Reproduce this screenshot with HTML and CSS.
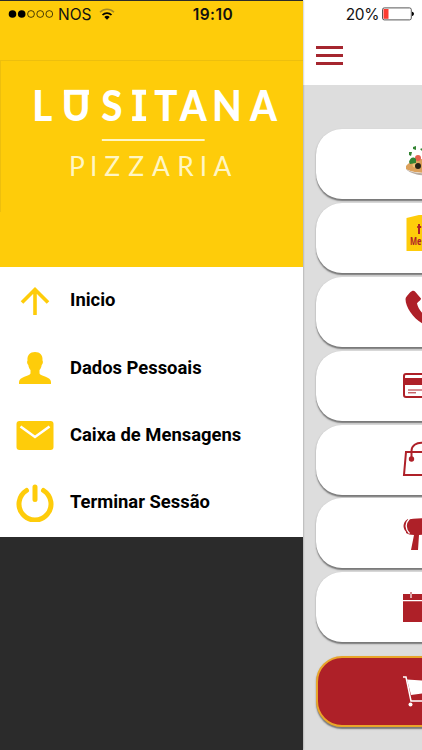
FILE: index.html
```html
<!DOCTYPE html>
<html lang="pt">
<head>
  <meta charset="UTF-8">
  <title>Lusitana Pizzaria</title>
  <link rel="stylesheet" href="styles.css">
</head>
<body>

<div class="app">
  <aside class="drawer">
    <div class="brand">
      <svg class="logo" width="303" height="152" viewBox="0 60 303 152">
        <text class="logo-name" transform="scale(.9 1)" y="120.500" x="34.500 67.500 111.500 147.500 171 199.500 235.500 278">LUSITANA</text>
        <path d="M63 91.500h25" stroke="#fff" stroke-width="5"/>
        <path d="M131.500 91.500h14M131.500 118h14" stroke="#fff" stroke-width="5"/>
        <path d="M101 139.500h103.500" stroke="#fff6c4" stroke-width="2"/>
        <text class="logo-sub" y="176" x="68 89 103.500 127.500 151.500 177 199.500 213.500">PIZZARIA</text>
      </svg>
    </div>

    <ul class="menu">
      <li>
        <svg width="38" height="38" viewBox="0 0 38 38"><path d="M19 33V8M6 20.500 19 7.500 32 20.500" fill="none" stroke="#fecc0a" stroke-width="3.600"/></svg>
        <span>Inicio</span>
      </li>
      <li>
        <svg width="38" height="38" viewBox="0 0 38 38"><path fill="#fecc0a" d="M19 3c5 0 8 3 7.500 8.500.8 1 .4 3.500-.8 4.500-.4 2.500-1.200 4-2.200 5v3.500c1 3 11.500 3 11.500 8.500v2H3v-2c0-5.500 10.500-5.500 11.500-8.500V21c-1-1-1.800-2.500-2.200-5-1.200-1-1.600-3.500-.8-4.500C11 6 14 3 19 3z"/></svg>
        <span>Dados Pessoais</span>
      </li>
      <li>
        <svg width="38" height="38" viewBox="0 0 38 38"><rect x="0.500" y="5" width="37" height="29" rx="3" fill="#fecc0a"/><path d="M4.500 10.500 19 21 33.500 10.500" fill="none" stroke="#fff" stroke-width="2.600"/></svg>
        <span>Caixa de Mensagens</span>
      </li>
      <li>
        <svg width="38" height="38" viewBox="0 0 38 38"><path d="M10.500 6.500a16 16 0 1 0 17 0M19 3v12.500" fill="none" stroke="#fecc0a" stroke-width="5" stroke-linecap="round"/></svg>
        <span>Terminar Sessão</span>
      </li>
    </ul>
  </aside>

  <main class="page">
    <header class="topbar">
      <div class="burger"><span></span><span></span><span></span></div>
    </header>

    <div class="cards">
      <div class="card raised">
        <svg width="40" height="40" viewBox="0 0 40 40">
          <path d="M4 24c4-4 10-7 18-7h18v13c-12 2-30 1-36-3z" fill="#dca15b"/>
          <path d="M4 27c7 5 21 5 36 4v2c-16 2-31 0-36-6z" fill="#b9aca0"/>
          <circle cx="16" cy="16" r="3" fill="#e4604e"/><circle cx="13" cy="23" r="2.500" fill="#edc479"/>
          <circle cx="16" cy="24" r="3" fill="#272417"/>
          <path d="M7 20c1-4 4-6 7-3v4l-6 1zM11 5l3-1v4l-3-1zM7 10h3l-1 4-2-1zM18 7l3-1v4z" fill="#338433"/>
        </svg>
      </div>
      <div class="card raised">
        <svg width="40" height="40" viewBox="0 0 40 40">
          <path d="M4.500 3 21-1h19v37H4.500z" fill="#fecc0a"/>
          <path d="M17 9v10M15.200 12h4" stroke="#ae2028" stroke-width="2"/>
          <text class="menu-tag" x="8" y="30" textLength="11.500" lengthAdjust="spacingAndGlyphs">Me</text>
        </svg>
      </div>
      <div class="card raised">
        <svg width="40" height="40" viewBox="0 0 40 40"><path fill="#ae2028" d="M8 3.500c2-2 4-2 5-1l6 7c0 2-3 3-4 5 1 5 5 10 10 14 3-1 4-4 6-4l8 6c1 2-4 7-8 7C19 38 3.500 22 3.500 10c0-2 2.500-4 4.500-6.500z"/></svg>
      </div>
      <div class="card">
        <svg width="40" height="40" viewBox="0 0 40 40"><rect x="2" y="8" width="42" height="23" rx="2" fill="#fff" stroke="#ae2028" stroke-width="2"/><path d="M2 15.500h38" stroke="#ae2028" stroke-width="7"/><path d="M6 24h34M6 26.800h8" stroke="#ae2028" stroke-width="1"/></svg>
      </div>
      <div class="card">
        <svg width="40" height="40" viewBox="0 0 40 40"><path d="M4 12h34l3 23H2zM9.500 19v-8c0-11 20-11 20 0v8" fill="none" stroke="#ae2028" stroke-width="2"/><circle cx="9.500" cy="19" r="2.700" fill="#ae2028"/></svg>
      </div>
      <div class="card">
        <svg width="40" height="40" viewBox="0 0 40 40"><path d="M5 7c6-2 18-2 35-2v15l-23 2-1 15H9l3-15c-4 0-6-1-8-2z" fill="#ae2028"/><path d="M6 6C0 9 0 17 6 20z" fill="#ae2028"/><path d="M7.500 5.500c-4.500 5-4.500 10 0 15" fill="none" stroke="#fff" stroke-width="1.300"/></svg>
      </div>
      <div class="card">
        <svg width="40" height="40" viewBox="0 0 40 40"><path d="M1 7h39v28H1z" fill="#ae2028"/><path d="M1 13.700h39M9 7v4" stroke="#fff" stroke-width="1.200"/><path d="M9 5v2" stroke="#ae2028"/></svg>
      </div>
      <div class="card cart">
        <svg width="40" height="40" viewBox="0 0 40 40"><path d="M1 5h3l5 24h31" fill="none" stroke="#fff" stroke-width="1.500"/><path d="M5 7.500 40 10v9L9 23z" fill="#fff"/><circle cx="8.500" cy="32.500" r="2" fill="#fff"/></svg>
      </div>
    </div>
  </main>

  <!-- iOS status bar, on top of both panels -->
  <div class="status">
    <div class="status-left">
      <svg width="45" height="10" viewBox="0 0 45 10">
        <circle cx="4.500" cy="5" r="3.800"/><circle cx="13.700" cy="5" r="3.800"/>
        <g fill="none" stroke="#000" stroke-width=".7"><circle cx="23" cy="5" r="3.400"/><circle cx="32.200" cy="5" r="3.400"/><circle cx="41.300" cy="5" r="3.400"/></g>
      </svg>
      <span class="carrier">NOS</span>
      <svg width="16" height="12" viewBox="0 0 16 12">
        <path d="M1 4.200c4-4 10-4 14 0" fill="none" stroke="#a58a22" stroke-width="1.500"/>
        <path d="M3.500 7c2.500-2.600 6.500-2.600 9 0" fill="none" stroke="#000" stroke-width="1.800"/>
        <path d="M5.300 8.900c1.500-1.500 3.900-1.500 5.400 0L8 11.700z"/>
      </svg>
    </div>
    <div class="time">19:10</div>
    <div class="status-right">
      <span>20%</span>
      <svg width="33" height="14" viewBox="0 0 33 14">
        <rect x=".5" y=".9" width="28.800" height="12" rx="1.800" fill="#fff" stroke="#444" stroke-width=".9"/>
        <rect x="1.500" y="2" width="5" height="9.800" fill="#fb3b30"/>
        <path d="M30 4.800c2.600 0 2.600 4.200 0 4.200z"/>
      </svg>
    </div>
  </div>
</div>

</body>
</html>
```
FILE: styles.css
```css
* {
  box-sizing: border-box;
}

body {
  margin: 0;
  font-family: Roboto, sans-serif;
}

.app {
  position: relative;
  display: flex;
  width: 422px;
  height: 750px;
  overflow: hidden;
  background: #ddd;
}

.drawer {
  position: relative;
  flex: 0 0 303px;
  background: #2b2b2b;
  box-shadow: 0 0 2px rgba(0, 0, 0, 0.4);
}

.brand {
  height: 267px;
  padding-top: 59px;
  background: #fecc0a;
  border-top: 1px solid #2b2b2b;
}

.logo {
  display: block;
  border-top: 1px solid #edbf0e;
  border-left: 1px solid #edbf0e;
}

.logo-name {
  font: 900 43px Lato, sans-serif;
  fill: #fff;
}

.logo-sub {
  font: 400 26.500px Lato, sans-serif;
  fill: #fff6c4;
}

.menu {
  height: 270px;
  margin: 0;
  padding: 0;
  list-style: none;
  background: #fff;
}

.menu li {
  display: flex;
  align-items: center;
  gap: 16.500px;
  height: 67.3px;
  padding-left: 15.500px;
  font-size: 18.400px;
  font-weight: bold;
  color: #000;
}

.menu span {
  padding-bottom: 1.500px;
}

.page {
  flex: 1;
  min-width: 0;
  overflow: hidden;
}

.topbar {
  height: 85px;
  padding: 46px 0 0 13px;
  background: #fff;
}

.burger {
  display: flex;
  flex-direction: column;
  gap: 5.3px;
  width: 27px;
}

.burger span {
  height: 2.700px;
  background: #a5262f;
}

.cards {
  display: flex;
  flex-direction: column;
  gap: 3.900px;
  width: 396px;
  margin: 44px 0 0 13px;
}

.card {
  display: flex;
  align-items: center;
  height: 70px;
  padding-left: 86px;
  background: #fff;
  border-radius: 26px;
  box-shadow: 0 1.500px 1.500px #777;
}

.raised {
  padding-bottom: 5px;
}

.cart {
  height: 71px;
  margin-top: 10px;
  background: #ae2028;
  border: 2px solid #e9a52a;
  padding-left: 84px;
}

.menu-tag {
  font: bold 10.500px "Open Sans", sans-serif;
  fill: #ae2028;
}

.status {
  position: absolute;
  top: 4px;
  left: 0;
  display: grid;
  grid-template-columns: 1fr auto 1fr;
  align-items: center;
  width: 422px;
  height: 20px;
  padding: 0 7px 0 8px;
  font: 15.500px Inter, sans-serif;
  color: #111;
}

.status-left,
.status-right {
  display: flex;
  align-items: center;
}

.carrier {
  margin: 0 8px 0 5px;
}

.time {
  padding-left: 3px;
  font-weight: 600;
  letter-spacing: 0.5px;
}

.status-right {
  justify-content: flex-end;
  gap: 3px;
  letter-spacing: -0.4px;
}
```
